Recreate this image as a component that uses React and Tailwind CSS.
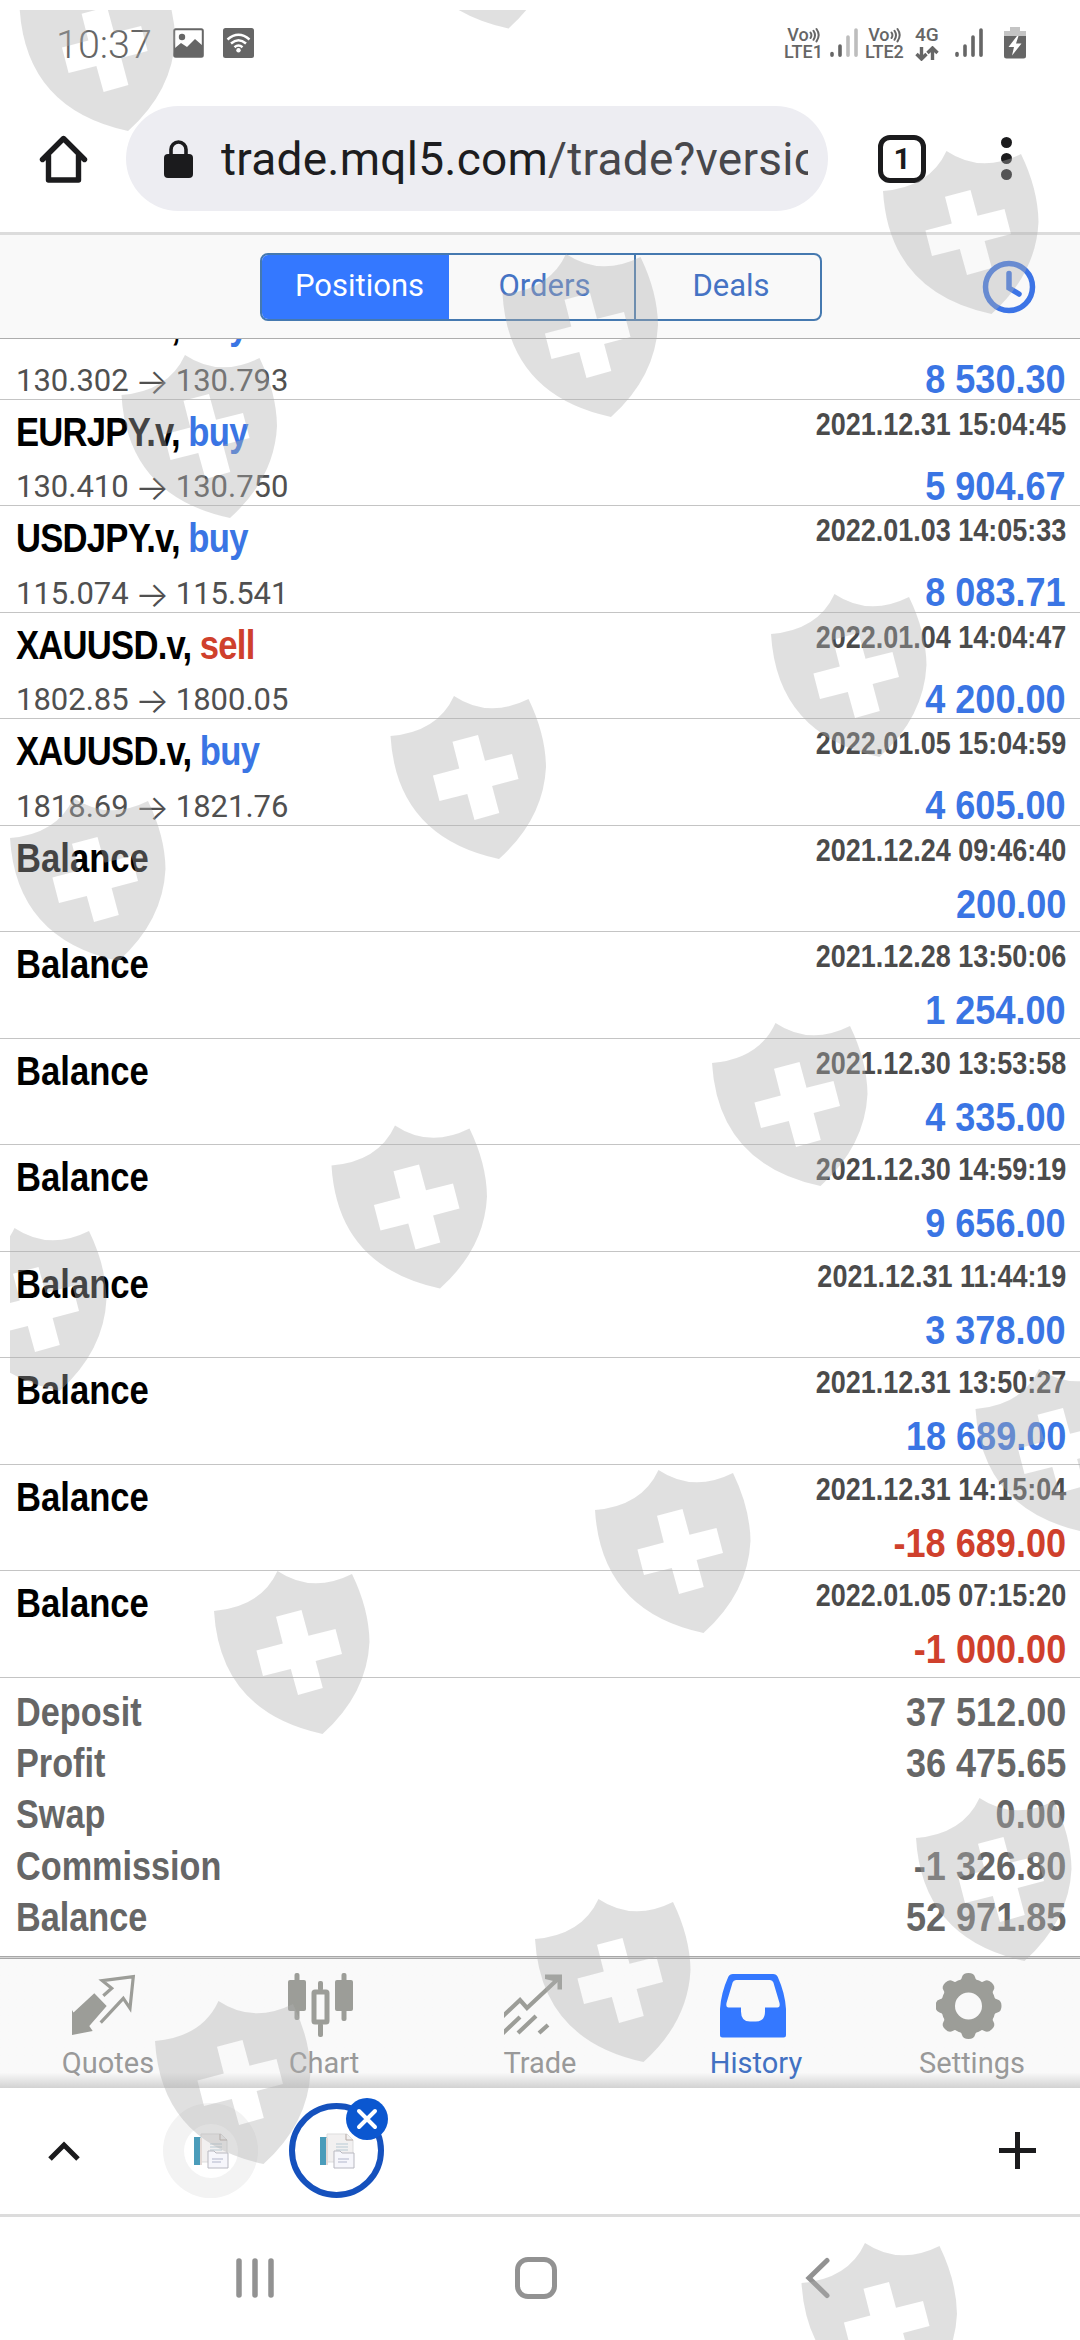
import { clsx } from 'clsx';

const POSITIONS = [
  { symbol: 'EURJPY.v,', side: 'buy', prices: ['130.302', '130.793'], time: '2021.12.31 15:03:12', amount: '8 530.30' },
  { symbol: 'EURJPY.v,', side: 'buy', prices: ['130.410', '130.750'], time: '2021.12.31 15:04:45', amount: '5 904.67' },
  { symbol: 'USDJPY.v,', side: 'buy', prices: ['115.074', '115.541'], time: '2022.01.03 14:05:33', amount: '8 083.71' },
  { symbol: 'XAUUSD.v,', side: 'sell', prices: ['1802.85', '1800.05'], time: '2022.01.04 14:04:47', amount: '4 200.00' },
  { symbol: 'XAUUSD.v,', side: 'buy', prices: ['1818.69', '1821.76'], time: '2022.01.05 15:04:59', amount: '4 605.00' },
  { symbol: 'Balance', time: '2021.12.24 09:46:40', amount: '200.00' },
  { symbol: 'Balance', time: '2021.12.28 13:50:06', amount: '1 254.00' },
  { symbol: 'Balance', time: '2021.12.30 13:53:58', amount: '4 335.00' },
  { symbol: 'Balance', time: '2021.12.30 14:59:19', amount: '9 656.00' },
  { symbol: 'Balance', time: '2021.12.31 11:44:19', amount: '3 378.00' },
  { symbol: 'Balance', time: '2021.12.31 13:50:27', amount: '18 689.00' },
  { symbol: 'Balance', time: '2021.12.31 14:15:04', amount: '-18 689.00' },
  { symbol: 'Balance', time: '2022.01.05 07:15:20', amount: '-1 000.00' },
];

const SUMMARY = [
  ['Deposit', '37 512.00'],
  ['Profit', '36 475.65'],
  ['Swap', '0.00'],
  ['Commission', '-1 326.80'],
  ['Balance', '52 971.85'],
];

const SHIELDS = [
  [19.6, -32], [400, -134.5],
  [883, 151], [502.5, 254], [121.5, 355],
  [771, 594], [390.5, 696], [10, 798],
  [712, 1023], [331.5, 1125.5], [-49, 1228],
  [975.5, 1369], [595, 1470], [214, 1571],
  [916, 1798], [535, 1899], [155, 2001],
  [801.5, 2243],
];

function Signal({ weak }) {
  return (
    <svg width="28" height="32" viewBox="0 0 28 32" stroke="#666" strokeWidth="3.6" strokeLinecap="round">
      <path d="M2 27.5v1.8M10 20v9.3" />
      <path d="M18 11v18.3M26 4v25.3" stroke={weak ? '#bdbdbd' : '#666'} />
    </svg>
  );
}

function Volte({ n }) {
  return (
    <div className="flex flex-col items-center font-medium text-[18px] leading-[17px] text-[#666]">
      <span className="flex items-center">
        Vo
        <svg width="11" height="16" viewBox="0 0 11 16" fill="none" stroke="#666" strokeWidth="2" strokeLinecap="round">
          <path d="M1.5 5.5q1.8 2.6 0 5.5M4.5 3.8q3 4.4 0 9M7.5 2q4.4 6 0 12.4" />
        </svg>
      </span>
      <span>LTE{n}</span>
    </div>
  );
}

function StatusBar() {
  return (
    <div className="flex h-[90px] shrink-0 items-start pl-[56px] pt-[26px] text-[#666]">
      <span className="w-[117px] text-[39.5px] font-[350] leading-[38px]">10:37</span>
      <svg className="mt-0.5" width="31" height="30" viewBox="0 0 31 30">
        <rect x="1.2" y="1.2" width="28.6" height="27.6" rx="1.5" fill="none" stroke="#666" strokeWidth="2" />
        <circle cx="9" cy="9" r="3.2" fill="#666" />
        <path d="M2 20l6-5 6 4 8-8 8 7v11H2z" fill="#666" />
      </svg>
      <svg className="ml-[19px] mt-0.5" width="31" height="30" viewBox="0 0 31 30">
        <rect width="31" height="30" rx="2.5" fill="#666" />
        <g fill="none" stroke="#fff" strokeWidth="2.5">
          <path d="M4.5 11.5q11-9.5 22 0M8 15.5q7.5-6.6 15 0M11.5 19.2q4-3.4 8 0" />
        </g>
        <circle cx="15.5" cy="22.3" r="2.2" fill="#fff" />
      </svg>
      <div className="ml-[530px] flex items-start">
        <Volte n="1" />
        <div className="ml-[7px]"><Signal weak /></div>
        <div className="ml-[7px]"><Volte n="2" /></div>
        <div className="ml-[11px] flex w-6 flex-col items-center text-[19px] font-medium leading-[18px]">
          4G
          <svg className="mt-0.5" width="24" height="15" viewBox="0 0 24 15" fill="none" stroke="#666" strokeWidth="3.4">
            <path d="M6.5 1v11M1.5 8l5 5 5-5M17.5 14V3M12.5 7l5-5 5 5" />
          </svg>
        </div>
        <div className="ml-4"><Signal /></div>
        <svg className="ml-[21px]" width="22" height="33" viewBox="0 0 22 33">
          <path d="M6 1h10v4h6v6H0V5h6z" fill="#c4c4c4" />
          <path d="M0 10h22v20q0 2.5-2.5 2.5h-17Q0 32.5 0 30z" fill="#666" />
          <path d="M13 10L4.5 21h5.5L8 29.5 17.5 17.5h-5.5L14.5 10z" fill="#fff" />
        </svg>
      </div>
    </div>
  );
}

function AddressBar() {
  return (
    <div className="flex h-[142px] shrink-0 items-center pb-[5px] pl-[39px]">
      <svg width="49" height="50" viewBox="0 0 49 50" fill="none" stroke="#1b1b1d" strokeWidth="5.4" strokeLinejoin="round" strokeLinecap="round">
        <path d="M3.5 25.5L24.5 4.5l21 21M9.5 21.5V46h30V21.5" />
      </svg>
      <div className="ml-[38px] flex h-[105px] w-[702px] items-center rounded-full bg-[#ededf2] pl-[38px] pr-5">
        <svg width="29" height="38" viewBox="0 0 29 38">
          <rect y="14" width="29" height="24" rx="4" fill="#1b1b1d" />
          <path d="M7 16V9.5a7.5 7.5 0 0 1 15 0V16" fill="none" stroke="#1b1b1d" strokeWidth="3.6" />
        </svg>
        <div className="ml-[28px] flex-1 overflow-hidden whitespace-nowrap text-[46px] leading-[60px] tracking-[0.25px] text-[#1d1d20]">
          trade.mql5.com<span className="text-[#47474b]">/trade?version=5</span>
        </div>
      </div>
      <div className="ml-[50px] flex h-[48px] w-[48px] items-center justify-center rounded-[12px] border-[5px] border-[#1b1b1d] text-[30px] font-bold text-[#1b1b1d]">
        1
      </div>
      <div className="ml-[75px] flex flex-col gap-[5px]">
        <i className="size-[11px] rounded-full bg-[#1b1b1d]" />
        <i className="size-[11px] rounded-full bg-[#1b1b1d]" />
        <i className="size-[11px] rounded-full bg-[#1b1b1d]" />
      </div>
    </div>
  );
}

function Segments() {
  return (
    <div className="flex h-[107px] shrink-0 items-center border-t-[3px] border-b border-t-[#dcdcdc] border-b-[#adadad] bg-[#f9f9f9] pl-[260px]">
      <div className="flex h-[68px] w-[562px] overflow-hidden rounded-[8px] border-2 border-[#4579b0] text-[31px] text-[#4573c4]">
        <div className="flex w-[187px] items-center justify-center bg-[#3478ff] pl-2 text-white">Positions</div>
        <div className="flex w-[187px] items-center justify-center border-r-2 border-[#4579b0] pl-1.5">Orders</div>
        <div className="flex flex-1 items-center justify-center pl-1.5">Deals</div>
      </div>
      <svg className="ml-[160px]" width="54" height="54" viewBox="0 0 54 54" fill="none" stroke="#3c74e6" strokeWidth="5.5">
        <circle cx="27" cy="27" r="23.5" />
        <path d="M27 13.5V28l10 6" strokeLinecap="round" />
      </svg>
    </div>
  );
}

function Row({ item }) {
  const negative = item.amount.startsWith('-');
  return (
    <div className="flex h-[106.5px] shrink-0 justify-between border-b border-[#c4c4c4] pl-4 pr-[14px]">
      <div className="flex flex-col whitespace-nowrap">
        <div
          className={clsx(
            "mt-[9px] h-[50px] origin-left scale-x-[0.845] font-['Liberation_Sans',sans-serif] text-[41px] font-bold leading-[46px] text-black",
            item.side && 'tracking-[-0.9px]',
          )}
        >
          {item.symbol}
          {item.side && (
            <span className={clsx('ml-[10px]', item.side === 'buy' ? 'text-[#3a75e4]' : 'text-[#cf402c]')}>{item.side}</span>
          )}
        </div>
        {item.prices && (
          <div className="mt-[11px] flex h-[36px] items-center text-[31px] leading-[36px] text-[#505050]">
            {item.prices[0]}
            <span className="flex w-[47px] justify-center font-['Inter',sans-serif] text-[36px] font-light">→</span>
            {item.prices[1]}
          </div>
        )}
      </div>
      <div className="flex flex-col items-end whitespace-nowrap font-['Liberation_Sans',sans-serif] font-bold">
        <div className="mt-[5px] origin-right scale-x-[0.843] text-[32px] leading-[38px] text-[#4b4b4b]">{item.time}</div>
        <div
          className={clsx(
            'origin-right scale-x-[0.88] text-[41px] leading-[46px]',
            item.side ? 'mt-5' : 'mt-3',
            negative ? 'text-[#cf402c]' : 'text-[#3a75e4]',
          )}
        >
          {item.amount}
        </div>
      </div>
    </div>
  );
}

function Summary() {
  return (
    <div className="flex h-[278px] shrink-0 flex-col pl-4 pr-[14px] pt-[9px] font-['Liberation_Sans',sans-serif] text-[41px] font-bold leading-[51.2px] text-[#666]">
      {SUMMARY.map(([label, value]) => (
        <div key={label} className="flex justify-between">
          <span className="origin-left scale-x-[0.835]">{label}</span>
          <span className="origin-right scale-x-[0.88]">{value}</span>
        </div>
      ))}
    </div>
  );
}

const TABS = [
  {
    label: 'Quotes',
    icon: (
      <>
        <path d="M0 37l1.500 2.500L22.300 20.300l12.400 12.700L17.300 53l3.400 5L0 62z" fill="#9c9d98" />
        <path d="M31.300 22.700l8.400-7.400-9.400-7.600 31-4-3.300 31.600-6.700-10L28.700 49.700" fill="none" stroke="#9c9d98" strokeWidth="3.2" />
      </>
    ),
  },
  {
    label: 'Chart',
    icon: (
      <g fill="#9c9d98">
        <rect y="7" width="18" height="31" rx="2" />
        <rect x="6.5" width="5" height="47" rx="2" />
        <rect x="47" y="7" width="18" height="31" rx="2" />
        <rect x="53.5" width="5" height="48" rx="2" />
        <rect x="30" y="8" width="5" height="10" rx="2" />
        <rect x="30" y="50" width="5" height="14" rx="2" />
        <rect x="26" y="19" width="13" height="30" rx="1" fill="none" stroke="#9c9d98" strokeWidth="5" />
      </g>
    ),
  },
  {
    label: 'Trade',
    icon: (
      <>
        <path d="M-3 45l19-18 7 8L54 6M-3 62l19-18M14 60l18-17M35 60l9-8" fill="none" stroke="#9c9d98" strokeWidth="4.2" />
        <path d="M41 1.500h17v15h-4.500V9L41 6z" fill="#9c9d98" />
      </>
    ),
  },
  {
    label: 'History',
    active: true,
    icon: (
      <path
        fillRule="evenodd"
        d="M13 1h40q3.500 0 4.800 3Q65 20 66 36v26q0 2.500-2.500 2.500h-61Q0 64.500 0 62V36Q1 20 8.200 4 9.500 1 13 1zM16 7q-2.500 0-3.400 2.500L6.500 30q-.8 4.500 2 4.500H21v4q0 10 9 10h6q9 0 9-10v-4h12.500q2.800 0 2-4.500L53.400 9.500Q52.500 7 50 7z"
        fill="#3478ff"
      />
    ),
  },
  {
    label: 'Settings',
    icon: (
      <g>
        <circle cx="32.500" cy="33" r="20.500" fill="none" stroke="#9c9d98" strokeWidth="14" />
        <g fill="#9c9d98">
          {[0, 45, 90, 135, 180, 225, 270, 315].map((a) => (
            <path key={a} d="M21 10q4-2 5-6 1-4 6.500-4T39 4q1 4 5 6z" transform={`rotate(${a} 32.500 33)`} />
          ))}
        </g>
      </g>
    ),
  },
];

function TabBar() {
  return (
    <div className="flex h-[132px] shrink-0 border-t-[3px] border-double border-[#a8a8a8] bg-linear-to-b from-[#f9f9f9] from-88% to-[#d2d2d2]">
      {TABS.map((tab) => (
        <div key={tab.label} className={clsx('flex flex-1 flex-col items-center', tab.active ? 'text-[#4271c2]' : 'text-[#999]')}>
          <svg className="mr-1.5 mt-3.5 overflow-hidden" width="66" height="66" viewBox="0 0 66 66">{tab.icon}</svg>
          <span className="mt-[7px] text-[29px] leading-[34px]">{tab.label}</span>
        </div>
      ))}
    </div>
  );
}

function PageThumb() {
  return (
    <svg width="36" height="36" viewBox="0 0 36 36">
      <path d="M8 1h20l6 6v22H8z" fill="#f2f0f0" stroke="#ddd" />
      <rect x="1" y="4" width="6.500" height="28" fill="#4b9cba" />
      <path d="M8 5v27" stroke="#e4d9d5" strokeWidth="2" />
      <path d="M17 11h12M17 14h12M17 17h12" stroke="#ccd6dd" strokeWidth="1.500" />
      <path d="M27 1v6h7" fill="none" stroke="#b5aaa5" />
      <path d="M15 18h6l2 2h12v15H15z" fill="#f6f6fb" stroke="#b9b9c1" />
      <path d="M19 26h11M19 29h9" stroke="#c9cbdc" strokeWidth="1.500" />
    </svg>
  );
}

function TabStrip() {
  return (
    <div className="flex h-[129px] shrink-0 items-center border-b-[3px] border-[#dcdcdc] bg-white pl-[48px]">
      <svg width="32" height="20" viewBox="0 0 32 20" fill="none" stroke="#1b1b1d" strokeWidth="5">
        <path d="M2 18L16 4l14 14" />
      </svg>
      <div className="ml-[83px] flex size-[95px] items-center justify-center rounded-full bg-[#f3f3f3]">
        <div className="flex size-[54px] items-center justify-center rounded-full bg-white">
          <PageThumb />
        </div>
      </div>
      <div className="relative ml-[31px] flex size-[95px] items-center justify-center rounded-full border-[6px] border-[#1551bd]">
        <PageThumb />
        <div className="absolute -right-[10px] -top-[11px] flex size-[42px] items-center justify-center rounded-full bg-[#0b57d0]">
          <svg width="22" height="22" viewBox="0 0 22 22" stroke="#fff" strokeWidth="4" strokeLinecap="round">
            <path d="M3 3l16 16M19 3L3 19" />
          </svg>
        </div>
      </div>
      <svg className="ml-[615px]" width="37" height="37" viewBox="0 0 37 37" stroke="#1b1b1d" strokeWidth="5">
        <path d="M18.500 0v37M0 18.500h37" />
      </svg>
    </div>
  );
}

function NavBar() {
  return (
    <div className="flex h-[123px] shrink-0 items-center pl-[236px]">
      <svg width="38" height="42" viewBox="0 0 38 42" stroke="#929292" strokeWidth="5.500" strokeLinecap="round">
        <path d="M3 4v34M19 4v34M35 4v34" />
      </svg>
      <div className="ml-[241px] h-[42px] w-[42px] rounded-[13px] border-[5px] border-[#929292]" />
      <svg className="ml-[248px]" width="26" height="42" viewBox="0 0 26 42" fill="none" stroke="#929292" strokeWidth="5" strokeLinecap="round">
        <path d="M22 3.500L4 21l18 17.500" />
      </svg>
    </div>
  );
}

function ShieldLayer() {
  return (
    <div className="pointer-events-none absolute bottom-0 left-[10px] right-0 top-[10px] overflow-hidden">
      <svg className="size-full" viewBox="10 10 1070 2330">
        {SHIELDS.map(([x, y]) => (
          <path
            key={`${x}-${y}`}
            transform={`translate(${x} ${y})`}
            fill="#aeaeae"
            fillOpacity="0.39"
            fillRule="evenodd"
            d="M0 40Q47 36 63.500 0Q98 23 138 3Q155 38 155.500 71Q153 123 108.500 163Q6 141 0 40ZM62 45.700L87.500 39 94.500 64.700 121.500 58 128 83 101.600 90 108.800 117 84 124 76.800 98 49 105 42.400 79.500 68.800 72.500Z"
          />
        ))}
      </svg>
    </div>
  );
}

export default function App() {
  return (
    <div className="relative flex h-[2340px] w-[1080px] flex-col overflow-hidden bg-white font-['Roboto',sans-serif]">
      <StatusBar />
      <AddressBar />
      <Segments />
      <div className="flex h-[1338.9px] shrink-0 flex-col justify-end overflow-hidden">
        {POSITIONS.map((item) => (
          <Row key={`${item.time}${item.amount}`} item={item} />
        ))}
      </div>
      <Summary />
      <TabBar />
      <TabStrip />
      <NavBar />
      <ShieldLayer />
    </div>
  );
}
